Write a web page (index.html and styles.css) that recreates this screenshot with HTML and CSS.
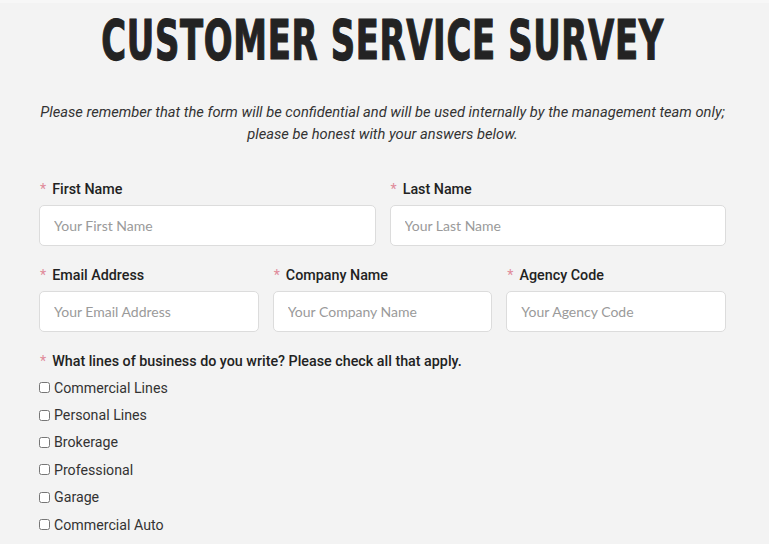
FILE: index.html
```html
<!DOCTYPE html>
<html>
<head>
<meta charset="utf-8">
<link rel="stylesheet" href="styles.css">
</head>
<body>
<div class="topbar"></div>
<main class="survey">
  <div class="title-wrap"><h1 class="title">CUSTOMER SERVICE SURVEY</h1></div>
  <p class="intro">Please remember that the form will be confidential and will be used internally by the management team only; please be honest with your answers below.</p>
  <form class="form">
    <div class="row two">
      <div class="field">
        <label class="label"><span class="req">*</span>First Name</label>
        <input class="input" type="text" placeholder="Your First Name">
      </div>
      <div class="field">
        <label class="label"><span class="req">*</span>Last Name</label>
        <input class="input" type="text" placeholder="Your Last Name">
      </div>
    </div>
    <div class="row three">
      <div class="field">
        <label class="label"><span class="req">*</span>Email Address</label>
        <input class="input" type="text" placeholder="Your Email Address">
      </div>
      <div class="field">
        <label class="label"><span class="req">*</span>Company Name</label>
        <input class="input" type="text" placeholder="Your Company Name">
      </div>
      <div class="field">
        <label class="label"><span class="req">*</span>Agency Code</label>
        <input class="input" type="text" placeholder="Your Agency Code">
      </div>
    </div>
    <div class="group">
      <div class="label"><span class="req">*</span>What lines of business do you write? Please check all that apply.</div>
      <label class="check"><input type="checkbox">Commercial Lines</label>
      <label class="check"><input type="checkbox">Personal Lines</label>
      <label class="check"><input type="checkbox">Brokerage</label>
      <label class="check"><input type="checkbox">Professional</label>
      <label class="check"><input type="checkbox">Garage</label>
      <label class="check"><input type="checkbox">Commercial Auto</label>
    </div>
  </form>
</main>
</body>
</html>
```
FILE: styles.css
```css
html, body {
  margin: 0;
  padding: 0;
  background: #f3f3f3;
  font-family: Roboto, "Liberation Sans", sans-serif;
  color: #222;
}
.topbar {
  height: 3px;
  background: #f7f7f7;
}
.survey {
  width: 687px;
  margin-left: 39px;
}
.title-wrap {
  display: flex;
  justify-content: center;
  padding-top: 5px;
  height: 64px;
}
.title {
  margin: 0;
  white-space: nowrap;
  font-family: "DejaVu Sans", sans-serif;
  font-stretch: condensed;
  font-weight: 700;
  font-size: 56px;
  line-height: 64px;
  letter-spacing: 1px;
  color: #232323;
  -webkit-text-stroke: 1.2px #232323;
  transform: scaleX(0.672);
}
.intro {
  margin: 29px 0 0;
  text-align: center;
  font-style: italic;
  font-size: 14.7px;
  line-height: 22px;
  color: #333;
}
.form {
  margin-top: 34px;
}
.row {
  display: grid;
  column-gap: 14px;
  margin-bottom: 19px;
}
.row.two { grid-template-columns: 1fr 1fr; }
.row.three { grid-template-columns: 1fr 1fr 1fr; }
.field {
  display: flex;
  flex-direction: column;
}
.label {
  display: block;
  font-size: 14.3px;
  font-weight: 500;
  line-height: 20px;
  color: #222;
  margin-bottom: 6px;
}
.req {
  color: #e08a9a;
  margin: 0 6px 0 1px;
  font-weight: 400;
}
.input {
  box-sizing: border-box;
  height: 41px;
  border: 1px solid #dcdcdc;
  border-radius: 5px;
  background: #fff;
  padding: 0 14px;
  font-family: Lato, sans-serif;
  font-size: 14px;
  color: #333;
  outline: none;
}
.input::placeholder {
  color: #9a9a9a;
}
.group .label {
  margin-bottom: 3px;
}
.check {
  display: flex;
  align-items: center;
  height: 27.4px;
  font-size: 14.2px;
  color: #333;
}
.check input {
  margin: 0 4px 0 0;
  width: 11px;
  height: 11px;
}
```
